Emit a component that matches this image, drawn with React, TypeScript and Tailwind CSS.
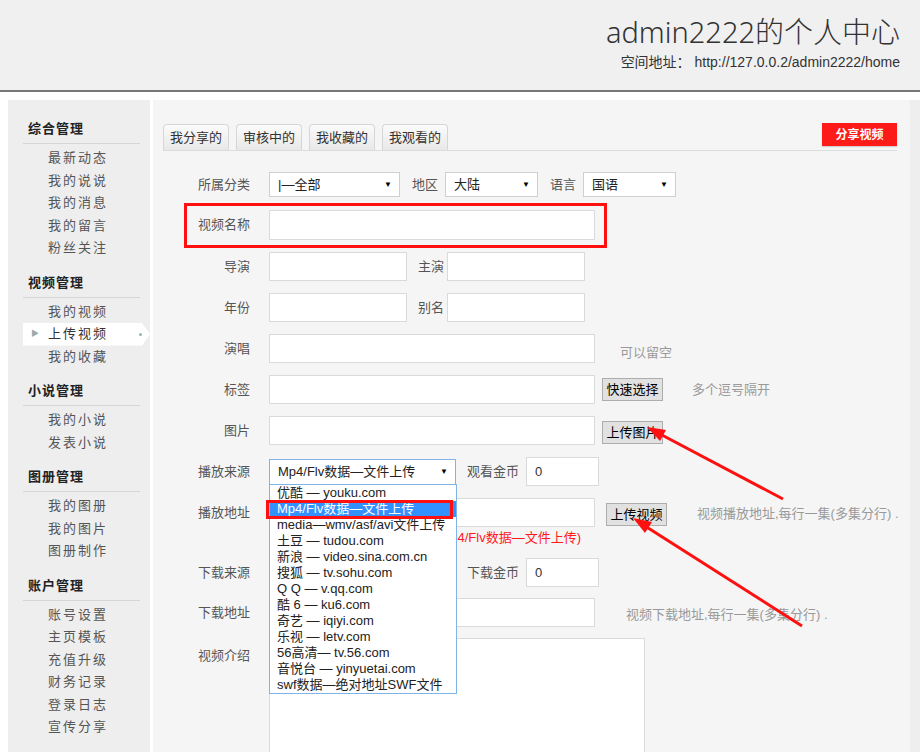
import React from 'react';

const sideMenu = [
  { title: '综合管理', items: ['最新动态', '我的说说', '我的消息', '我的留言', '粉丝关注'] },
  { title: '视频管理', items: ['我的视频', '上传视频', '我的收藏'] },
  { title: '小说管理', items: ['我的小说', '发表小说'] },
  { title: '图册管理', items: ['我的图册', '我的图片', '图册制作'] },
  { title: '账户管理', items: ['账号设置', '主页模板', '充值升级', '财务记录', '登录日志', '宣传分享'] },
];

const tabs = ['我分享的', '审核中的', '我收藏的', '我观看的'];

const sources = [
  '优酷 — youku.com',
  'Mp4/Flv数据—文件上传',
  'media—wmv/asf/avi文件上传',
  '土豆 — tudou.com',
  '新浪 — video.sina.com.cn',
  '搜狐 — tv.sohu.com',
  'Q Q — v.qq.com',
  '酷 6 — ku6.com',
  '奇艺 — iqiyi.com',
  '乐视 — letv.com',
  '56高清— tv.56.com',
  '音悦台 — yinyuetai.com',
  'swf数据—绝对地址SWF文件',
];

const Label = ({ children, className = '' }: { children: React.ReactNode; className?: string }) => (
  <span className={`text-[13px] text-[#555] whitespace-nowrap ${className}`}>{children}</span>
);

const RowLabel = ({ children }: { children: React.ReactNode }) => (
  <div className="w-[97px] shrink-0 text-right text-[13px] text-[#555] mr-[19px]">{children}</div>
);

const inputCls = 'h-[29px] bg-white border border-[#dadada] px-2 text-[13px] text-[#333] outline-none';

const FakeSelect = ({ text, className = '' }: { text: string; className?: string }) => (
  <div className={`flex items-center justify-between bg-white border pl-[8px] pr-[7px] text-[13px] text-[#222] ${className}`}>
    <span className="whitespace-nowrap">{text}</span>
    <span className="text-[8px] text-black">▼</span>
  </div>
);

const Btn = ({ children, className = '' }: { children: React.ReactNode; className?: string }) => (
  <button className={`h-[23px] w-[61px] bg-[#e1e1e1] border border-[#adadad] text-[13px] text-black leading-none ${className}`}>
    {children}
  </button>
);

const Hint = ({ children, className = '' }: { children: React.ReactNode; className?: string }) => (
  <span className={`text-[13px] text-[#999] whitespace-nowrap ${className}`}>{children}</span>
);

export default function App() {
  return (
    <div className="relative w-[920px] h-[752px] overflow-hidden bg-white font-['Liberation_Sans','Noto_Sans_CJK_SC',sans-serif]">
      {/* header */}
      <div className="h-[92px] bg-[#f0f0f0] border-b-2 border-[#777] flex flex-col items-end pr-[20px]">
        <div className="mt-[14px] leading-[36px] text-[29px] font-light text-[#333] font-['Noto_Sans','Noto_Sans_CJK_SC',sans-serif]">
          admin2222的个人中心
        </div>
        <div className="mt-[3px] leading-[18px] text-[14px] text-[#333]">空间地址： http://127.0.0.2/admin2222/home</div>
      </div>

      <div className="flex h-[660px] pt-[8px]">
        {/* sidebar */}
        <div className="ml-[8px] w-[142px] shrink-0 bg-[#eeeeee] pt-[19px]">
          {sideMenu.map((sec) => (
            <div key={sec.title} className="mb-[13px]">
              <div className="ml-[15px] mr-[10px] pl-[5px] h-[25px] leading-[20px] pb-[4px] border-b border-[#d6d6d6] text-[13px] font-bold text-[#222] tracking-[1px]">
                {sec.title}
              </div>
              <div className="pt-[3px]">
                {sec.items.map((it) =>
                  it === '上传视频' ? (
                    <div
                      key={it}
                      className="relative ml-[15px] h-[22.5px] leading-[22.5px] bg-white pl-[25px] text-[13px] text-[#333] tracking-[2px] [clip-path:polygon(0_0,calc(100%-8px)_0,100%_50%,calc(100%-8px)_100%,0_100%)]"
                    >
                      <span className="absolute left-[8px] top-0 text-[8px] text-[#9aa9a9]">▶</span>
                      {it}
                      <span className="absolute left-[116px] top-[10px] w-[3px] h-[3px] rounded-full bg-[#9cb89c]" />
                    </div>
                  ) : (
                    <div key={it} className="ml-[15px] h-[22.5px] leading-[22.5px] pl-[25px] text-[13px] text-[#555] tracking-[2px]">
                      {it}
                    </div>
                  )
                )}
              </div>
            </div>
          ))}
        </div>

        {/* main */}
        <div className="relative ml-[3px] w-[757px] shrink-0 bg-[#f5f5f5] pt-[24px]">
          <div className="ml-[10px] w-[734px] flex items-end justify-between border-b border-[#dcdcdc]">
            <div className="flex gap-[7px]">
              {tabs.map((t) => (
                <div
                  key={t}
                  className="w-[66px] h-[26px] flex items-center justify-center rounded-t-[4px] border-t border-x border-[#d6d6d6] bg-gradient-to-b from-[#fbfbfb] to-[#e8e8e8] text-[13px] text-[#333]"
                >
                  {t}
                </div>
              ))}
            </div>
            <button className="self-start -mt-[1px] w-[75px] h-[23px] bg-[#ff1a1a] text-white text-[12px] font-bold shadow-[0_1px_1px_rgba(0,0,0,0.15)]">
              分享视频
            </button>
          </div>

          {/* form */}
          <div className="mt-[21px]">
            <div className="flex items-center h-[25px]">
              <RowLabel>所属分类</RowLabel>
              <FakeSelect text="|—全部" className="w-[131px] h-[25px] border-[#cfcfcf]" />
              <Label className="ml-[12px] mr-[7px]">地区</Label>
              <FakeSelect text="大陆" className="w-[93px] h-[25px] border-[#cfcfcf]" />
              <Label className="ml-[12px] mr-[7px]">语言</Label>
              <FakeSelect text="国语" className="w-[93px] h-[25px] border-[#cfcfcf]" />
            </div>

            <div className="flex items-center h-[30px] mt-[13px]">
              <RowLabel>视频名称</RowLabel>
              <input className={`${inputCls} w-[326px] h-[30px]`} />
            </div>

            <div className="flex items-center h-[29px] mt-[12px]">
              <RowLabel>导演</RowLabel>
              <input className={`${inputCls} w-[138px]`} />
              <Label className="ml-[11px] mr-[3px]">主演</Label>
              <input className={`${inputCls} w-[138px]`} />
            </div>

            <div className="flex items-center h-[29px] mt-[12px]">
              <RowLabel>年份</RowLabel>
              <input className={`${inputCls} w-[138px]`} />
              <Label className="ml-[11px] mr-[3px]">别名</Label>
              <input className={`${inputCls} w-[138px]`} />
            </div>

            <div className="flex items-center h-[29px] mt-[12px]">
              <RowLabel>演唱</RowLabel>
              <input className={`${inputCls} w-[326px]`} />
              <Hint className="ml-[25px] mt-[8px]">可以留空</Hint>
            </div>

            <div className="flex items-center h-[29px] mt-[12px]">
              <RowLabel>标签</RowLabel>
              <input className={`${inputCls} w-[326px]`} />
              <Btn className="ml-[7px]">快速选择</Btn>
              <Hint className="ml-[29px]">多个逗号隔开</Hint>
            </div>

            <div className="flex items-center h-[29px] mt-[12px]">
              <RowLabel>图片</RowLabel>
              <input className={`${inputCls} w-[326px]`} />
              <Btn className="ml-[7px] mt-[4px]">上传图片</Btn>
            </div>

            <div className="flex items-center h-[29px] mt-[12px]">
              <RowLabel>播放来源</RowLabel>
              <FakeSelect text="Mp4/Flv数据—文件上传" className="w-[187px] h-[26px] border-[#7eb4ea]" />
              <Label className="ml-[11px] mr-[7px]">观看金币</Label>
              <input defaultValue="0" className={`${inputCls} w-[73px]`} />
            </div>

            <div className="flex items-center h-[29px] mt-[12px]">
              <RowLabel>播放地址</RowLabel>
              <input className={`${inputCls} w-[326px]`} />
              <Btn className="ml-[11px] mt-[3px] w-[60px]">上传视频</Btn>
              <Hint className="ml-[30px] mt-[3px]">视频播放地址,每行一集(多集分行) .</Hint>
            </div>

            <div className="flex justify-end overflow-hidden h-[16px] mt-[3px] ml-[116px] w-[312px] text-[13px] leading-[16px] text-[#ff1a1a] whitespace-nowrap">
              <span>(Mp4/Flv数据—文件上传)</span>
            </div>

            <div className="flex items-center h-[29px] mt-[12px]">
              <RowLabel>下载来源</RowLabel>
              <FakeSelect text="" className="w-[187px] h-[26px] border-[#cfcfcf]" />
              <Label className="ml-[11px] mr-[7px]">下载金币</Label>
              <input defaultValue="0" className={`${inputCls} w-[73px]`} />
            </div>

            <div className="flex items-center h-[29px] mt-[11px]">
              <RowLabel>下载地址</RowLabel>
              <input className={`${inputCls} w-[326px]`} />
              <Hint className="ml-[31px] mt-[4px]">视频下载地址,每行一集(多集分行) .</Hint>
            </div>

            <div className="flex items-start mt-[11px]">
              <div className="pt-[8px]">
                <RowLabel>视频介绍</RowLabel>
              </div>
              <textarea className="w-[376px] h-[130px] bg-white border border-[#dadada] outline-none" />
            </div>
          </div>

          {/* annotation box around 视频名称 */}
          <div className="pointer-events-none absolute left-[31px] top-[103px] w-[423px] h-[45px] border-[3px] border-[#ff0f0f]" />

          {/* open dropdown list */}
          <div className="absolute left-[116px] top-[384px] w-[188px] bg-white border border-[#7eb4ea] text-[13px] text-[#222]">
            {sources.map((s, i) => (
              <div
                key={s}
                className={`h-[16px] leading-[16px] pl-[7px] whitespace-nowrap ${i === 1 ? 'bg-[#3390ff] text-white' : ''}`}
              >
                {s}
              </div>
            ))}
          </div>
          <div className="pointer-events-none absolute left-[113px] top-[400px] w-[187px] h-[19px] border-[3px] border-[#ff0f0f]" />
        </div>

        <div className="flex-1 bg-[#eeeeee]" />
      </div>

      {/* red arrows */}
      <svg className="pointer-events-none absolute left-0 top-0" width="920" height="752" viewBox="0 0 920 752">
        <line x1="783" y1="499" x2="660" y2="434" stroke="#ff1010" strokeWidth="3" />
        <polygon points="647,427 666,430 660,441" fill="#ff1010" />
        <line x1="802" y1="626" x2="645" y2="526" stroke="#ff1010" strokeWidth="3" />
        <polygon points="633,518 652,522 645,533" fill="#ff1010" />
      </svg>
    </div>
  );
}
